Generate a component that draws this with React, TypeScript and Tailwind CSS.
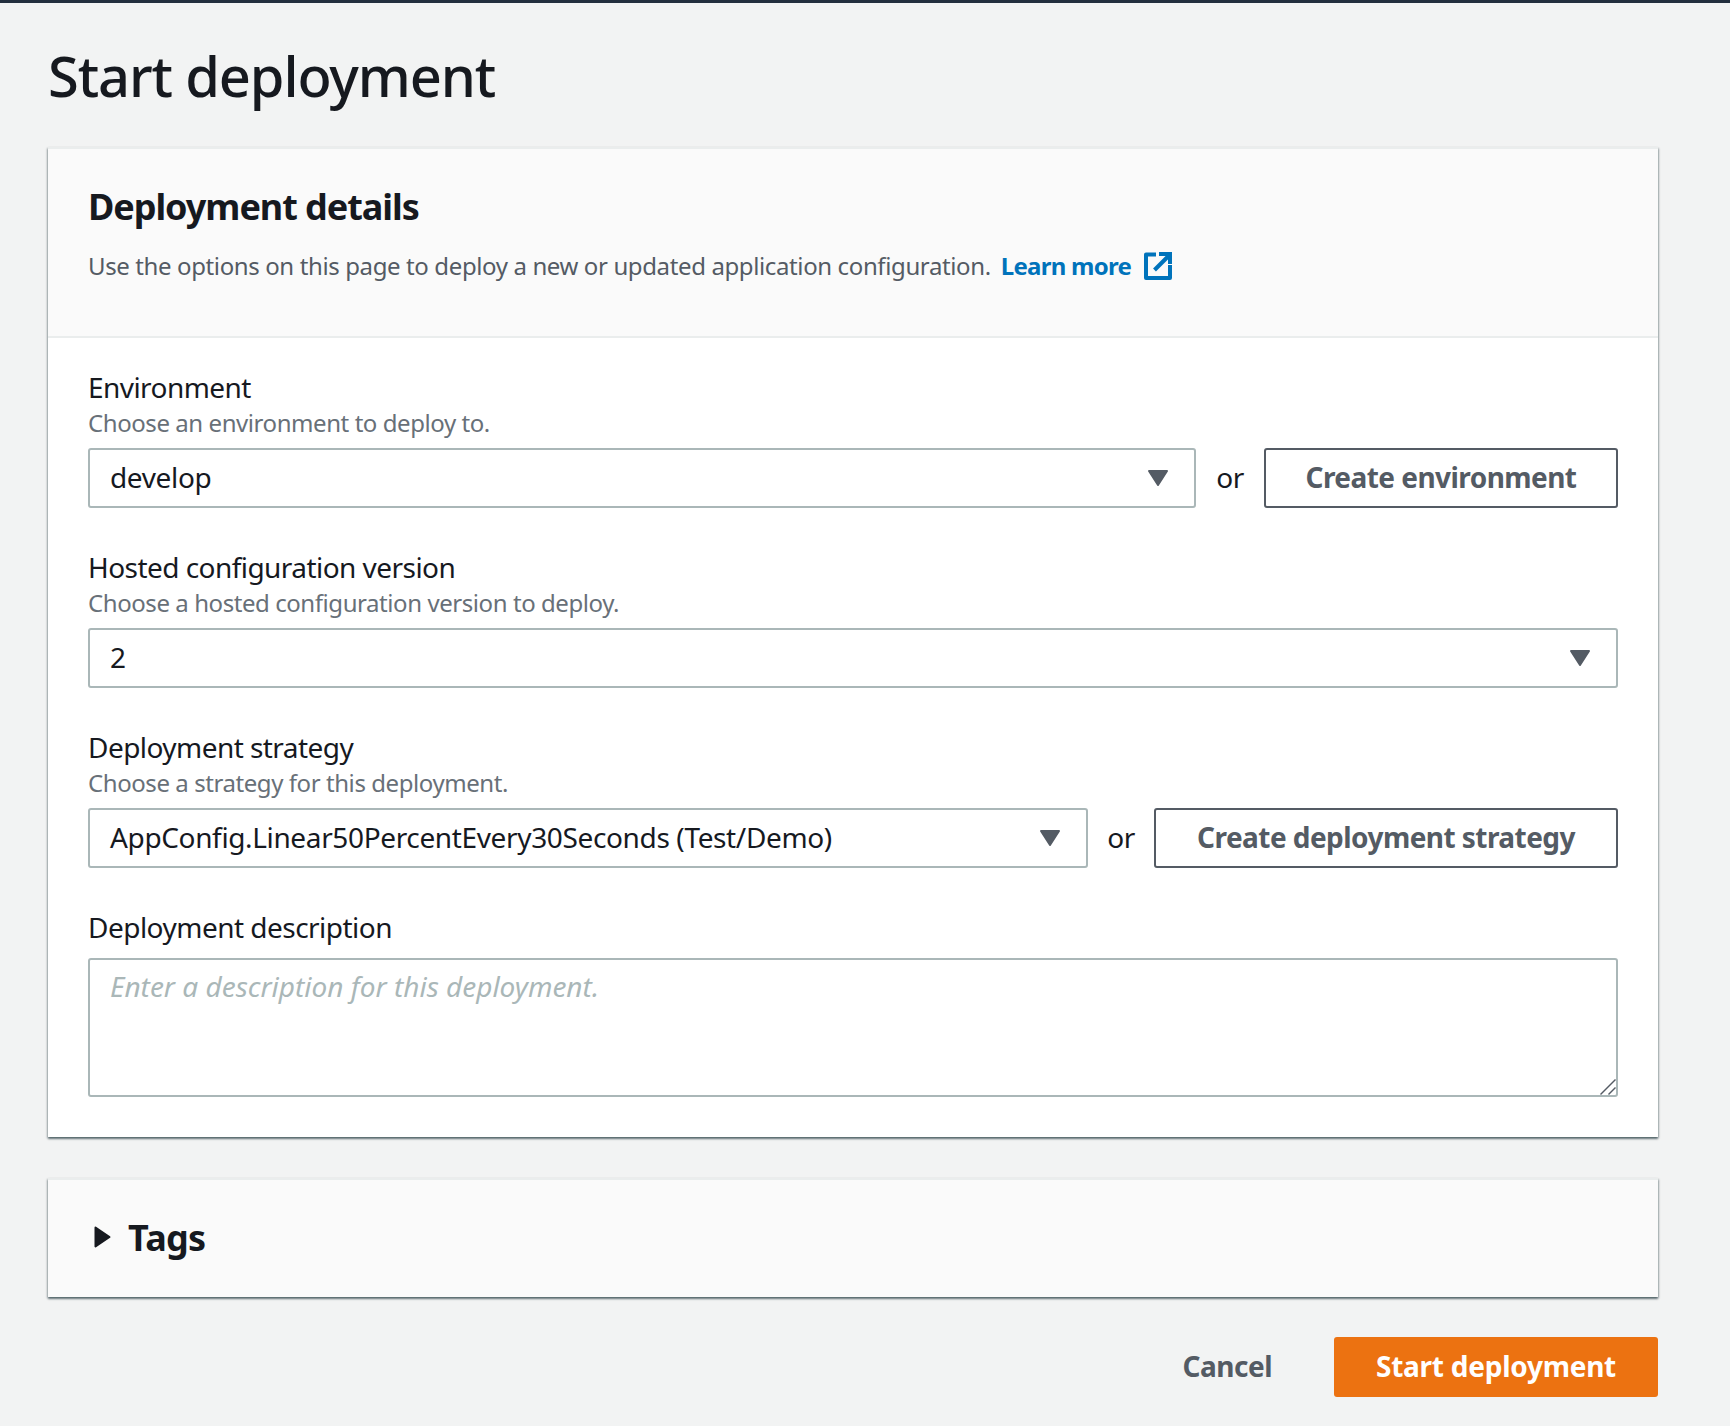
const font = "font-['Noto_Sans',sans-serif]"
const panelShadow = 'shadow-[0_2px_2px_rgba(0,28,36,0.5),1px_1px_2px_rgba(0,28,36,0.2),-1px_1px_2px_rgba(0,28,36,0.2)]'

function Caret() {
  return (
    <svg width="22" height="18" viewBox="0 0 22 18" className="shrink-0">
      <path d="M2 2 H20 L11 16 Z" fill="#545b64" stroke="#545b64" strokeWidth="2" strokeLinejoin="round" />
    </svg>
  )
}

function ExternalIcon() {
  return (
    <svg width="28" height="28" viewBox="0 0 28 28" fill="none" stroke="#0073bb" strokeWidth="4" className="shrink-0">
      <path d="M12 2.5 H2 V26 H26 V13" strokeLinejoin="round" />
      <path d="M10.5 18 L24.5 4" />
      <path d="M15 2 H26 V12" />
    </svg>
  )
}

function Select({ value, className = '' }: { value: string; className?: string }) {
  return (
    <div className={`flex h-[60px] items-center justify-between rounded-[3px] border-2 border-[#aab7b8] bg-white pl-[20px] pr-[25px] text-[28px] tracking-[-0.36px] text-[#16191f] ${className}`}>
      <span className="pb-[2px]">{value}</span>
      <Caret />
    </div>
  )
}

function OutlineButton({ label, className = '' }: { label: string; className?: string }) {
  return (
    <button className={`flex h-[60px] items-center justify-center rounded-[3px] border-2 border-[#545b64] bg-white pb-[2px] text-[28px] font-bold tracking-[-0.55px] text-[#545b64] ${className}`}>
      {label}
    </button>
  )
}

function Field({ label, hint, children }: { label: string; hint: string; children: React.ReactNode }) {
  return (
    <div className="flex flex-col">
      <div className="h-[36px] text-[28px] leading-[34px] tracking-[-0.55px] text-[#16191f]">{label}</div>
      <div className="mb-[6px] h-[36px] text-[24px] leading-[34px] tracking-[-0.43px] text-[#687078]">{hint}</div>
      {children}
    </div>
  )
}

export default function App() {
  return (
    <div className={`${font} flex h-[1426px] flex-col bg-[#f2f3f3] pl-[48px] pr-[72px]`}>
      <div className="fixed inset-x-0 top-0 h-[3px] bg-[#232f3e]" />
      <h1 className="flex h-[147px] items-center pt-[3px] text-[56px] font-medium tracking-[-1.13px] text-[#16191f]">Start deployment</h1>

      {/* Deployment details */}
      <section className={`flex h-[990px] flex-col border-t-2 border-[#eaeded] bg-white ${panelShadow}`}>
        <header className="flex h-[189px] flex-col border-b-2 border-[#eaeded] bg-[#fafafa] px-[40px] pt-[36px]">
          <h2 className="h-[44px] text-[36px] font-bold leading-[44px] tracking-[-1.05px] text-[#16191f]">Deployment details</h2>
          <p className="mt-[19px] flex h-[36px] items-center text-[24px] tracking-[-0.38px] text-[#545b64]">
            Use the options on this page to deploy a new or updated application configuration.
            <a className="ml-[10px] mr-[13px] font-bold tracking-[-0.74px] text-[#0073bb]">Learn more</a>
            <ExternalIcon />
          </p>
        </header>

        <div className="flex flex-col gap-[42px] px-[40px] pt-[32px]">
          <Field label="Environment" hint="Choose an environment to deploy to.">
            <div className="flex items-center">
              <Select value="develop" className="w-[1108px]" />
              <span className="w-[68px] pb-[2px] text-center text-[28px] tracking-[-0.4px] text-[#16191f]">or</span>
              <OutlineButton label="Create environment" className="flex-1" />
            </div>
          </Field>
          <Field label="Hosted configuration version" hint="Choose a hosted configuration version to deploy.">
            <Select value="2" />
          </Field>
          <Field label="Deployment strategy" hint="Choose a strategy for this deployment.">
            <div className="flex items-center">
              <Select value="AppConfig.Linear50PercentEvery30Seconds (Test/Demo)" className="w-[1000px]" />
              <span className="w-[66px] pb-[2px] text-center text-[28px] tracking-[-0.4px] text-[#16191f]">or</span>
              <OutlineButton label="Create deployment strategy" className="flex-1" />
            </div>
          </Field>
          <div className="flex flex-col">
            <label className="mb-[12px] h-[36px] text-[28px] leading-[34px] tracking-[-0.52px] text-[#16191f]">Deployment description</label>
            <div className="relative flex">
              <textarea
                placeholder="Enter a description for this deployment."
                className="h-[139px] w-full resize-none rounded-[3px] border-2 border-[#aab7b8] bg-white px-[20px] py-[5px] text-[28px] text-[#16191f] outline-none placeholder:italic placeholder:text-[#aab7b8]"
              />
              <svg width="16" height="16" viewBox="0 0 16 16" fill="none" stroke="#545b64" strokeWidth="1.4" className="pointer-events-none absolute bottom-[2px] right-[2px]">
                <path d="M0.5 15.5 L15.5 0.5" />
                <path d="M8.5 15.5 L15.5 8.5" />
              </svg>
            </div>
          </div>
        </div>
      </section>

      {/* Tags */}
      <section className={`mt-[41px] flex h-[119px] items-center border-t-2 border-[#eaeded] bg-[#fafafa] pl-[46px] ${panelShadow}`}>
        <svg width="17" height="22" viewBox="0 0 17 22" className="mb-[4px] mr-[17px]">
          <path d="M1.5 1.5 L15.5 11 L1.5 20.5 Z" fill="#16191f" stroke="#16191f" strokeWidth="2" strokeLinejoin="round" />
        </svg>
        <h2 className="pb-[2px] text-[36px] font-bold tracking-[-0.7px] text-[#16191f]">Tags</h2>
      </section>

      {/* Actions */}
      <div className="mt-[40px] flex items-center justify-end">
        <button className="mr-[62px] pb-[2px] text-[28px] font-bold tracking-[-0.5px] text-[#545b64]">Cancel</button>
        <button className="flex h-[60px] w-[324px] items-center justify-center rounded-[3px] bg-[#ec7211] pb-[2px] text-[28px] font-bold tracking-[-0.25px] text-white">
          Start deployment
        </button>
      </div>
    </div>
  )
}
